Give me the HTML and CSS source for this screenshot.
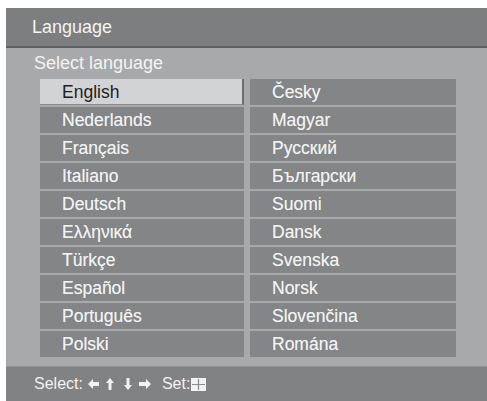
FILE: index.html
```html
<!DOCTYPE html>
<html>
<head>
<meta charset="utf-8">
<link rel="stylesheet" href="styles.css">
</head>
<body>
<div class="frame">
  <div class="header">Language</div>
  <div class="panel">
    <div class="label">Select language</div>
    <div class="grid">
      <div class="cell sel">English</div>
      <div class="cell">Česky</div>
      <div class="cell">Nederlands</div>
      <div class="cell">Magyar</div>
      <div class="cell">Français</div>
      <div class="cell">Русский</div>
      <div class="cell">Italiano</div>
      <div class="cell">Български</div>
      <div class="cell">Deutsch</div>
      <div class="cell">Suomi</div>
      <div class="cell">Ελληνικά</div>
      <div class="cell">Dansk</div>
      <div class="cell">Türkçe</div>
      <div class="cell">Svenska</div>
      <div class="cell">Español</div>
      <div class="cell">Norsk</div>
      <div class="cell">Português</div>
      <div class="cell">Slovenčina</div>
      <div class="cell">Polski</div>
      <div class="cell">Romána</div>
    </div>
  </div>
  <div class="footer">
    <span class="sel-txt">Select:</span>
    <svg class="ico a1" width="11" height="10" viewBox="0 0 11 10"><path d="M0 5 L5 0 L5 3 L11 3 L11 7 L5 7 L5 10 Z" fill="#f2f2f2"/></svg>
    <svg class="ico a2" width="8" height="12" viewBox="0 0 8 12"><path d="M4 0 L8 5 L5.5 5 L5.5 12 L2.5 12 L2.5 5 L0 5 Z" fill="#f2f2f2"/></svg>
    <svg class="ico a3" width="8" height="12" viewBox="0 0 8 12"><path d="M4 12 L8 7 L5.5 7 L5.5 0 L2.5 0 L2.5 7 L0 7 Z" fill="#f2f2f2"/></svg>
    <svg class="ico a4" width="12" height="10" viewBox="0 0 12 10"><path d="M12 5 L7 0 L7 3 L0 3 L0 7 L7 7 L7 10 Z" fill="#f2f2f2"/></svg>
    <span class="set">Set:</span>
    <svg class="ico sq" width="15" height="13" viewBox="0 0 15 13"><rect x="0" y="0" width="15" height="13" fill="#f2f2f2"/><path d="M7.5 1 V12 M1 6.5 H14" stroke="#8a8c8e" stroke-width="1.2"/></svg>
  </div>
</div>
</body>
</html>
```
FILE: styles.css
```css
html, body {
  margin: 0;
  padding: 0;
  background: #ffffff;
}
body {
  font-family: "Liberation Sans", Arial, sans-serif;
}
.frame {
  margin: 8px 0 0 6px;
  width: 481px;
  height: 393px;
  display: flex;
  flex-direction: column;
  background: #a6a8aa;
}
.header {
  height: 38px;
  background: #7c7e80;
  border-bottom: 2px solid #5e6062;
  color: #f4f4f4;
  font-size: 18px;
  line-height: 38px;
  padding-left: 26px;
}
.panel {
  flex: 1;
  background: #a7a9ab;
  display: flex;
  flex-direction: column;
  padding-left: 34px;
}
.label {
  height: 31px;
  color: #f4f4f4;
  font-size: 18px;
  line-height: 30px;
  margin-left: -6px;
}
.grid {
  display: grid;
  grid-template-columns: 204px 206px;
  column-gap: 6px;
  grid-auto-rows: 26px;
  row-gap: 2px;
}
.cell {
  background: #838587;
  color: #f2f2f2;
  font-size: 17.5px;
  line-height: 27px;
  padding-left: 22px;
  box-sizing: border-box;
  text-shadow: 0 0 0.6px rgba(255, 255, 255, 0.6);
}
.cell.sel {
  background: #d2d3d5;
  color: #1e1e1e;
  border-right: 2px solid #6c6e70;
  border-bottom: 1px solid #8a8c8e;
  line-height: 26px;
  text-shadow: none;
}
.footer {
  height: 34px;
  background: #808284;
  border-top: 1px solid #909294;
  display: flex;
  align-items: center;
  padding-left: 28px;
  color: #f2f2f2;
  font-size: 16px;
}
.sel-txt {
  margin-right: 5px;
}
.a1 { margin-right: 7px; }
.a2 { margin-right: 10px; }
.a3 { margin-right: 7px; }
.a4 { margin-right: 11px; }
.set {
  margin-right: 1px;
}
.ico {
  display: block;
}
```
